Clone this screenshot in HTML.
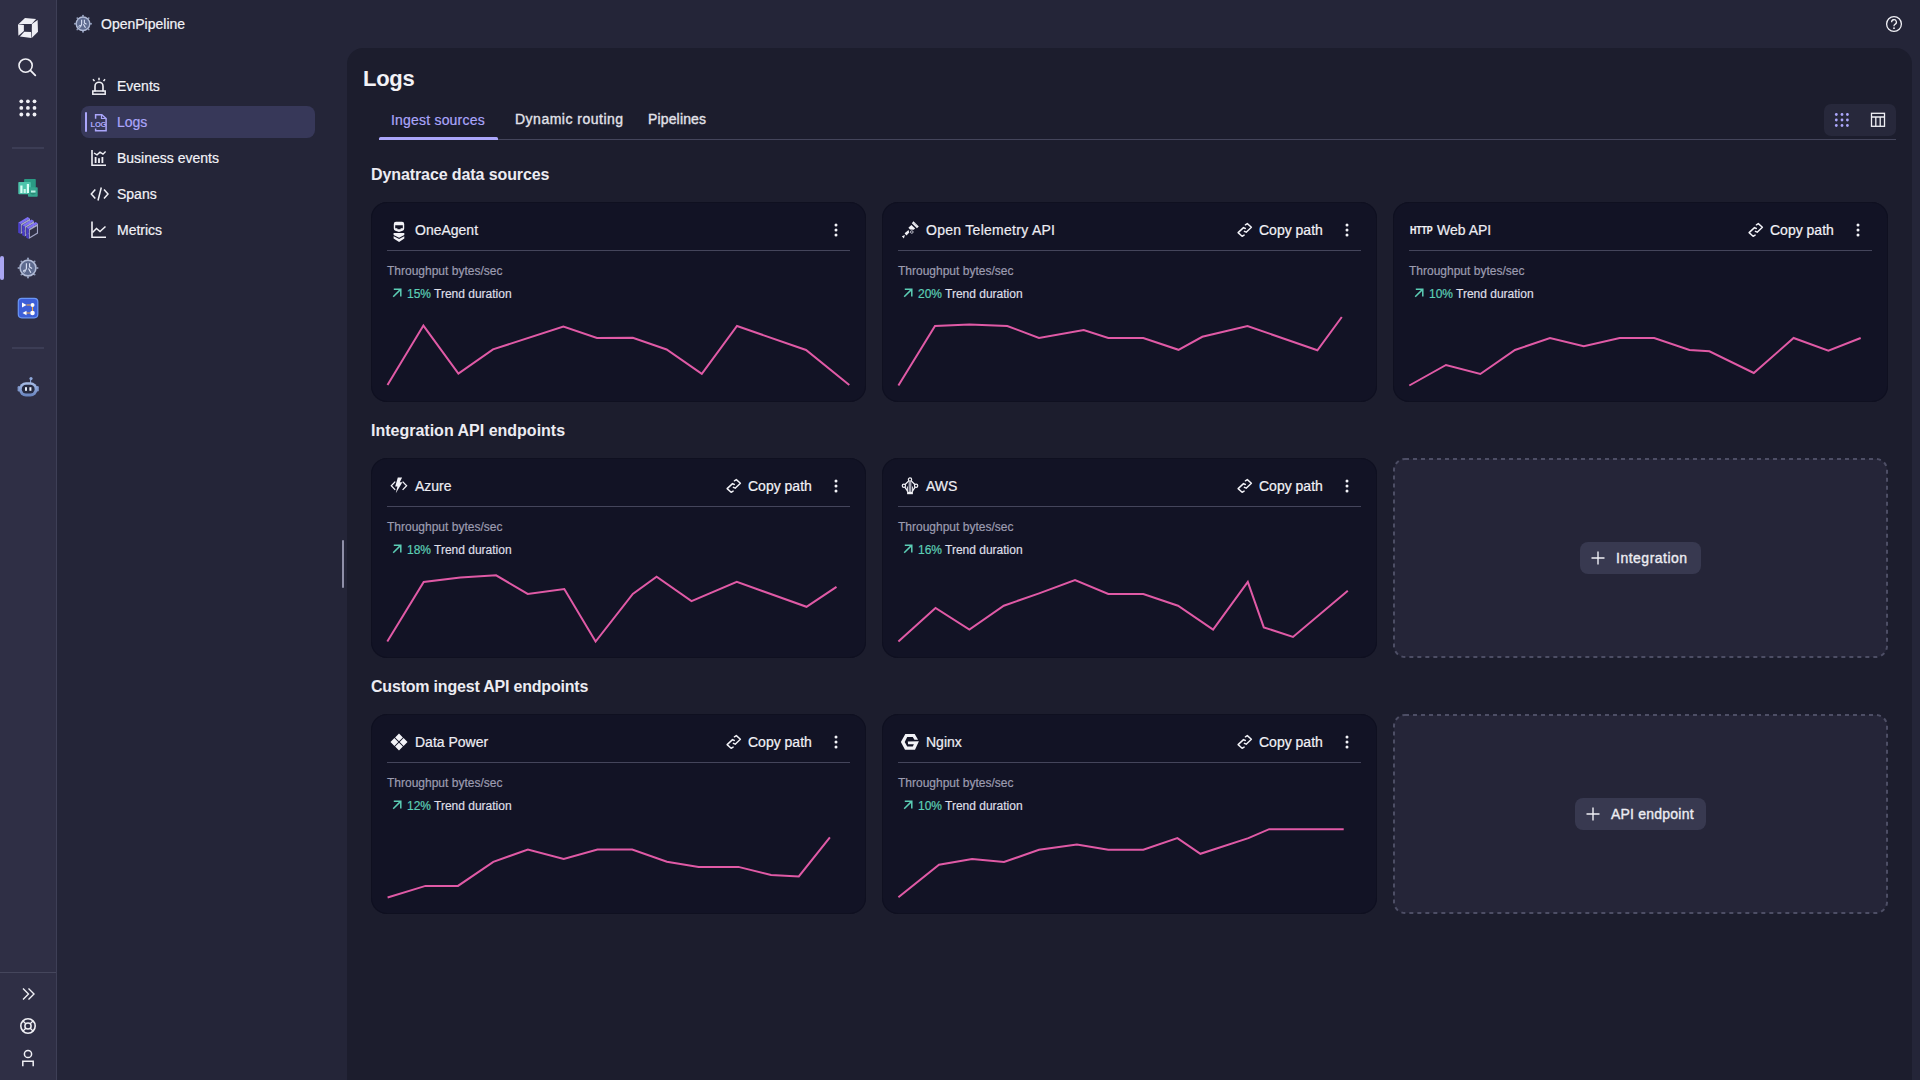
<!DOCTYPE html>
<html><head><meta charset="utf-8"><style>
*{margin:0;padding:0;box-sizing:border-box}
svg{display:block}
html,body{width:1920px;height:1080px;overflow:hidden;background:#242538;font-family:"Liberation Sans",sans-serif;color:#f2f2f7;-webkit-text-stroke-width:0.2px}
.abs{position:absolute}
#rail{position:absolute;left:0;top:0;width:57px;height:1080px;background:#2f2f45;border-right:1px solid #3e3f56}
#panel{position:absolute;left:347px;top:48px;width:1565px;height:1060px;background:#1c1d2d;border-radius:16px}
.nav{position:absolute;left:117px;font-size:14px;line-height:20px;white-space:nowrap}
.navicon{position:absolute;left:90px}
.sect{position:absolute;left:371px;font-size:16px;font-weight:bold;-webkit-text-stroke-width:0;line-height:20px;white-space:nowrap;letter-spacing:-0.22px;color:#ececf2}
.card{position:absolute;width:495px;height:200px;background:#121325;border-radius:16px;box-shadow:0 0 0 1px #0f1020 inset}
.card .cicon{position:absolute}
.ctitle{position:absolute;top:18px;font-size:14px;line-height:20px;white-space:nowrap;color:#ededf3}
.copy{position:absolute;left:377px;top:18px;font-size:14px;line-height:20px;white-space:nowrap}
.link{position:absolute;width:16px;height:16px}
.kebab{position:absolute;left:462px;top:20px;width:6px;height:16px}
.csep{position:absolute;left:16px;right:16px;top:48px;height:1px;background:#44455b}
.tp{position:absolute;left:16px;top:61px;font-size:12px;line-height:16px;color:#9c9cb0;white-space:nowrap}
.arrow{position:absolute;left:21px;top:86px;width:10px;height:10px}
.pct{position:absolute;left:36px;top:84px;font-size:12px;line-height:16px;color:#5ccdb5;white-space:nowrap}
.td{position:absolute;top:84px;font-size:12px;line-height:16px;white-space:nowrap;color:#dedee6}
.ph{position:absolute;width:495px;height:200px;background:#252538;border:1.5px dashed #4d4e65;border-radius:16px}
.btn{position:absolute;height:32px;background:#383950;border-radius:8px;font-size:14px;line-height:32px;white-space:nowrap}
</style></head><body>
<div id="rail">
 <svg class="abs" style="left:0;top:0" width="57" height="1080">
  <g fill="#efeff5">
   <path d="M18.6 23.9L25 18 36.1 19.1 31.7 23.9z"/>
   <path d="M31.9 23.9L37.6 19.9 38 31.7 31.7 38z"/>
   <path d="M19.9 36.5L24.3 31.7 31 32 31.3 38z"/>
   <path d="M18 24.3L23.9 25 23.9 31 18.4 35.8z"/>
  </g>
  <circle cx="25.6" cy="65.6" r="6.6" fill="none" stroke="#f0f0f5" stroke-width="1.6"/>
  <path d="M30.4 70.4L35.3 75.3" stroke="#f0f0f5" stroke-width="1.8" stroke-linecap="round"/>
  <g fill="#f0f0f5">
   <circle cx="21.3" cy="101.3" r="1.9"/><circle cx="27.9" cy="101.3" r="1.9"/><circle cx="34.5" cy="101.3" r="1.9"/>
   <circle cx="21.3" cy="107.9" r="1.9"/><circle cx="27.9" cy="107.9" r="1.9"/><circle cx="34.5" cy="107.9" r="1.9"/>
   <circle cx="21.3" cy="114.5" r="1.9"/><circle cx="27.9" cy="114.5" r="1.9"/><circle cx="34.5" cy="114.5" r="1.9"/>
  </g>
  <rect x="12" y="147" width="32" height="2" fill="#3c3d55"/>
  <rect x="24.1" y="178.9" width="11.7" height="9" rx="0.8" fill="#2a9a84"/>
  <rect x="18.3" y="182" width="12.5" height="12.2" rx="0.8" fill="#4cc4ab"/>
  <rect x="28" y="187.2" width="9.7" height="9.5" rx="0.8" fill="#35a58f"/>
  <rect x="20.3" y="185.5" width="2.2" height="7.5" fill="#d8fff6"/><rect x="23.6" y="189" width="2.2" height="4" fill="#c8f5ea"/><rect x="26.8" y="184" width="2.2" height="9" fill="#d8fff6"/>
  <path d="M30 193a3.5 3.5 0 0 0 6 0z" fill="#2a8a76"/><path d="M31 190.5h4.5v2h-4.5z" fill="#bff0e4"/>
  <polygon points="20.67,223.90 29.97,218.50 29.97,228.50 20.67,233.90" fill="#a3a6c6"/><polygon points="21.80,225.30 28.85,221.20 28.85,227.80 21.80,231.90" fill="#2f2f45"/><polygon points="18.17,222.70 20.67,223.90 20.67,233.90 18.17,232.70" fill="#4a3ec8"/><polygon points="18.17,222.70 27.60,217.10 29.97,218.50 20.67,223.90" fill="#7e70f6"/><polygon points="24.70,226.40 34.00,221.00 34.00,231.00 24.70,236.40" fill="#a3a6c6"/><polygon points="25.83,227.80 32.88,223.70 32.88,230.30 25.83,234.40" fill="#2f2f45"/><polygon points="22.20,225.20 24.70,226.40 24.70,236.40 22.20,235.20" fill="#4a3ec8"/><polygon points="22.20,225.20 31.63,219.60 34.00,221.00 24.70,226.40" fill="#7e70f6"/><polygon points="28.73,228.90 38.03,223.50 38.03,233.50 28.73,238.90" fill="#a3a6c6"/><polygon points="29.86,230.30 36.91,226.20 36.91,232.80 29.86,236.90" fill="#2f2f45"/><polygon points="26.23,227.70 28.73,228.90 28.73,238.90 26.23,237.70" fill="#4a3ec8"/><polygon points="26.23,227.70 35.66,222.10 38.03,223.50 28.73,228.90" fill="#7e70f6"/>
  <rect x="0" y="256" width="4" height="24" rx="2" fill="#aaa6f2"/>
  <g fill="#8e9ab8">
   <circle cx="28" cy="258.6" r="1.1"/><circle cx="28" cy="277.4" r="1.1"/><circle cx="18.6" cy="268" r="1.1"/><circle cx="37.4" cy="268" r="1.1"/>
   <circle cx="21.4" cy="261.4" r="0.95"/><circle cx="34.6" cy="261.4" r="0.95"/><circle cx="21.4" cy="274.6" r="0.95"/><circle cx="34.6" cy="274.6" r="0.95"/>
  </g>
  <circle cx="28" cy="268" r="8.7" fill="#b1bbd6"/>
  <circle cx="28" cy="268" r="7.1" fill="#5d6a8e"/>
  <path d="M26.4 263.3v5.2c0 1-.8 1.8-2 2.4M29.6 263.3v3.7l2.5 1.5M28.5 268.5l2.4 4.2" fill="none" stroke="#d9e0f4" stroke-width="1.15"/>
  <circle cx="24.3" cy="271.1" r="1" fill="none" stroke="#d9e0f4" stroke-width="0.9"/>
  <rect x="18.3" y="298.3" width="19.5" height="19.5" rx="3.5" fill="#3d5fd8" stroke="#6a95f4" stroke-width="1.2"/>
  <path d="M22 302.5l4.5 2.5-4.5 2.5z" fill="#ffffff"/><circle cx="32.5" cy="305" r="2" fill="#ffffff"/>
  <path d="M26.5 305h4M32.5 307v4M30 313h-4" stroke="#f4a33a" stroke-width="1.1"/>
  <path d="M22.5 313l4-2.3v4.6z" fill="#ffffff"/><circle cx="32.5" cy="313" r="2.3" fill="#ffffff"/>
  <rect x="12" y="347" width="32" height="2" fill="#3c3d55"/>
  <defs><linearGradient id="rb" x1="0" y1="0" x2="0" y2="1"><stop offset="0" stop-color="#a9bde6"/><stop offset="1" stop-color="#6682bd"/></linearGradient></defs>
  <circle cx="31" cy="378.6" r="1.6" fill="#8fa9dc"/>
  <path d="M30.6 380v3" stroke="#8fa9dc" stroke-width="1"/>
  <rect x="17.6" y="386" width="2.4" height="5.5" rx="1.2" fill="#7d95c9"/><rect x="36.4" y="386" width="2.4" height="5.5" rx="1.2" fill="#7d95c9"/>
  <rect x="19" y="382.3" width="18.4" height="14.3" rx="7" fill="url(#rb)"/>
  <rect x="21.8" y="384.8" width="12.8" height="8.6" rx="4.2" fill="#262a40"/>
  <rect x="25" y="387.2" width="2" height="3.6" fill="#e8edf8"/><rect x="29.4" y="387.2" width="2" height="3.6" fill="#e8edf8"/>
  <rect x="0" y="972" width="56" height="1" fill="#45465c"/>
  <path d="M23 988.5l5.5 5.5-5.5 5.5M28.5 988.5l5.5 5.5-5.5 5.5" fill="none" stroke="#f0f0f5" stroke-width="1.4"/>
  <circle cx="28" cy="1026" r="7.2" fill="none" stroke="#f0f0f5" stroke-width="1.6"/>
  <circle cx="28" cy="1026" r="3.1" fill="none" stroke="#f0f0f5" stroke-width="1.5"/>
  <path d="M23 1021l2.8 2.8M33 1021l-2.8 2.8M23 1031l2.8-2.8M33 1031l-2.8-2.8" stroke="#f0f0f5" stroke-width="1.3"/>
  <circle cx="28" cy="1054" r="3.6" fill="none" stroke="#f0f0f5" stroke-width="1.5"/>
  <path d="M22.8 1066.2v-5h10.4v5" fill="none" stroke="#f0f0f5" stroke-width="1.5"/>
 </svg>
</div>

<!-- top header -->
<svg class="abs" style="left:73px;top:14px" width="20" height="20" viewBox="0 0 20 20">
 <g transform="translate(10 9.75) scale(0.86)">
  <g fill="#8e9ab8">
   <circle cx="0" cy="-9.3" r="1.2"/><circle cx="0" cy="9.3" r="1.2"/><circle cx="-9.3" cy="0" r="1.2"/><circle cx="9.3" cy="0" r="1.2"/>
   <circle cx="-6.6" cy="-6.6" r="1.05"/><circle cx="6.6" cy="-6.6" r="1.05"/><circle cx="-6.6" cy="6.6" r="1.05"/><circle cx="6.6" cy="6.6" r="1.05"/>
  </g>
  <circle cx="0" cy="0" r="8.7" fill="#b1bbd6"/>
  <circle cx="0" cy="0" r="7.1" fill="#5d6a8e"/>
  <path d="M-1.6 -4.7v5.2c0 1-.8 1.8-2 2.4M1.6 -4.7v3.7l2.5 1.5M0.5 0.5l2.4 4.2" fill="none" stroke="#d9e0f4" stroke-width="1.25"/>
  <circle cx="-3.7" cy="3.1" r="1.1" fill="none" stroke="#d9e0f4" stroke-width="1"/>
 </g>
</svg>
<div class="abs" style="left:101px;top:14px;font-size:14px;line-height:20px">OpenPipeline</div>
<svg class="abs" style="left:1884px;top:14px" width="20" height="20" viewBox="0 0 20 20">
 <circle cx="10" cy="10" r="7.4" fill="none" stroke="#f0f0f5" stroke-width="1.3"/>
 <path d="M7.6 8.2a2.4 2.4 0 1 1 3.4 2.1c-.7.4-1 .8-1 1.6v.4" fill="none" stroke="#f0f0f5" stroke-width="1.3"/>
 <circle cx="10" cy="14.2" r="0.9" fill="#f0f0f5"/>
</svg>

<!-- sidebar -->
<div class="abs" style="left:81px;top:106px;width:234px;height:32px;background:#373859;border-radius:8px"></div>
<div class="abs" style="left:85px;top:112px;width:2px;height:20px;background:#aba6fb;border-radius:1px"></div>
<svg class="abs" style="left:89px;top:76px" width="20" height="20" viewBox="0 0 20 20">
 <path d="M6 15.5v-5.3a4 4 0 0 1 8 0v5.3" fill="none" stroke="#f0f0f5" stroke-width="1.6"/>
 <rect x="3.8" y="15" width="12.4" height="3.2" fill="none" stroke="#f0f0f5" stroke-width="1.5"/>
 <path d="M10 1.8v2.4M4 3.2l1.5 1.9M16 3.2l-1.5 1.9" stroke="#f0f0f5" stroke-width="1.5"/>
</svg>
<svg class="abs" style="left:89px;top:112px" width="22" height="22" viewBox="0 0 22 22">
 <path d="M6.6 6.8V2.7h6.2l4.3 3.8v12.3H6.6v-2.4" fill="none" stroke="#aba6fb" stroke-width="1.5"/>
 <path d="M12.5 2.7v3.8h4.6" fill="none" stroke="#aba6fb" stroke-width="1.2"/>
 <rect x="1" y="8.6" width="13" height="7.2" fill="#373859"/>
 <text x="1.6" y="15.2" font-family="Liberation Sans" font-weight="bold" font-size="7.6" letter-spacing="-0.3" fill="#aba6fb">LOG</text>
</svg>
<svg class="abs" style="left:89px;top:148px" width="20" height="20" viewBox="0 0 20 20">
 <path d="M3 2v15.3h14" fill="none" stroke="#f0f0f5" stroke-width="1.6"/>
 <path d="M5 5l3 1.8 3-2.6 3 2 2.6-2.6" fill="none" stroke="#f0f0f5" stroke-width="1.4"/>
 <path d="M6.6 9v6M10 10.3v4.7M13.4 9v6" stroke="#f0f0f5" stroke-width="1.8"/>
</svg>
<svg class="abs" style="left:89px;top:184px" width="22" height="20" viewBox="0 0 22 20">
 <path d="M6.3 5.5L2.3 10l4 4.5M15 5.5l4 4.5-4 4.5M12.3 3.5l-3.3 13" fill="none" stroke="#f0f0f5" stroke-width="1.5"/>
</svg>
<svg class="abs" style="left:89px;top:220px" width="20" height="20" viewBox="0 0 20 20">
 <path d="M3 1.5v15.8h14" fill="none" stroke="#f0f0f5" stroke-width="1.6"/>
 <path d="M3.5 12.5l4-4 3.5 3 5.5-5" fill="none" stroke="#f0f0f5" stroke-width="1.5"/>
</svg>
<div class="nav" style="top:76px">Events</div>
<div class="nav" style="top:112px;color:#aba6fb">Logs</div>
<div class="nav" style="top:148px">Business events</div>
<div class="nav" style="top:184px">Spans</div>
<div class="nav" style="top:220px">Metrics</div>
<div class="abs" style="left:342px;top:540px;width:2px;height:48px;background:#8f8fa8;border-radius:1px"></div>

<div id="panel"></div>
<div class="abs" style="left:363px;top:65px;-webkit-text-stroke-width:0;font-size:22px;font-weight:bold;line-height:28px;letter-spacing:-0.3px">Logs</div>
<div class="abs" style="left:379px;top:139px;width:1517px;height:1px;background:#44455b"></div>
<div class="abs" style="left:379px;top:137px;width:119px;height:3px;background:#aba6fb;border-radius:1.5px 1.5px 0 0"></div>
<div class="abs" style="left:391px;top:110px;font-size:14px;line-height:20px;color:#aba6fb;letter-spacing:0.2px">Ingest sources</div>
<div class="abs" style="left:515px;top:109px;font-size:14px;line-height:20px;letter-spacing:0.5px;-webkit-text-stroke:0.35px #e2e2ea;color:#e2e2ea">Dynamic routing</div>
<div class="abs" style="left:648px;top:109px;font-size:14px;line-height:20px;letter-spacing:0.15px;-webkit-text-stroke:0.35px #e2e2ea;color:#e2e2ea">Pipelines</div>
<div class="abs" style="left:1824px;top:104px;width:72px;height:32px;background:#27283b;border-radius:7px"></div>
<svg class="abs" style="left:1830px;top:108px" width="60" height="24" viewBox="0 0 60 24">
 <g fill="#aba6fb">
  <circle cx="6.3" cy="6.5" r="1.4"/><circle cx="12" cy="6.5" r="1.4"/><circle cx="17.4" cy="6.5" r="1.4"/>
  <circle cx="6.3" cy="12" r="1.4"/><circle cx="12" cy="12" r="1.4"/><circle cx="17.4" cy="12" r="1.4"/>
  <circle cx="6.3" cy="17.5" r="1.4"/><circle cx="12" cy="17.5" r="1.4"/><circle cx="17.4" cy="17.5" r="1.4"/>
 </g>
 <rect x="41.5" y="5.3" width="13" height="13" fill="none" stroke="#f0f0f5" stroke-width="1.3"/>
 <path d="M41.5 9h13M45.8 9v9.3M50.2 9v9.3" stroke="#f0f0f5" stroke-width="1.3"/>
</svg>

<div class="sect" style="top:165px;letter-spacing:-0.1px">Dynatrace data sources</div>
<div class="sect" style="top:421px;letter-spacing:0px">Integration API endpoints</div>
<div class="sect" style="top:677px;letter-spacing:-0.2px">Custom ingest API endpoints</div>
<div class="card" style="left:371px;top:202px"><div class="cicon" style="left:19px;top:19px"><svg width="12" height="22" viewBox="0 0 12 22" style="margin-left:3px;margin-top:0px"><path d="M0.8 3a2.2 2.2 0 0 1 2.2-2.2h6a2.2 2.2 0 0 1 2.2 2.2v4.6a2.4 2.4 0 0 1-1.6 2.2L6 11 2.4 9.8A2.4 2.4 0 0 1 0.8 7.6z M2.2 4.3h7.6v2.9H7.6v1H4.4v-1H2.2z" fill="#f2f2f7" fill-rule="evenodd"/><path d="M0.6 12.1h10.7V14L6.1 16.8 0.6 14z M0.6 15.3l5.5 2.8 5.2-2.8v2.1L6.1 21 0.6 17.4z" fill="#f2f2f7"/></svg></div><div class="ctitle" style="left:44px">OneAgent</div><div class="kebab"><svg width="6" height="16" viewBox="0 0 6 16"><circle cx="3" cy="3" r="1.5" fill="#f2f2f7"/><circle cx="3" cy="8" r="1.5" fill="#f2f2f7"/><circle cx="3" cy="13" r="1.5" fill="#f2f2f7"/></svg></div><div class="csep"></div><div class="tp">Throughput bytes/sec</div><div class="arrow"><svg width="10" height="10" viewBox="0 0 10 10"><path d="M1.2 8.8L8.6 1.4M1.8 1.3h7v7.2" fill="none" stroke="#5ccdb5" stroke-width="1.5"/></svg></div><div class="pct">15%</div><div class="td" style="left:63px">Trend duration</div></div><div class="card" style="left:882px;top:202px"><div class="cicon" style="left:19px;top:19px"><svg width="22" height="22" viewBox="0 0 22 22" style="margin-left:-2px;margin-top:-2px"><path d="M12.85 4.3L14.45 2.35 19.75 7.45 17.95 9.15z" fill="#f2f2f7"/><path d="M14.3 5.2l1.3-1.4M15.6 6.4l1.3-1.4M16.9 7.6l1.3-1.4" stroke="#9a9aa8" stroke-width="0.6"/><path d="M9.4 8.7L12.4 5.9 16.1 9.6 14.7 10.8 11 10.4z" fill="#f2f2f7"/><path d="M5.6 14.3L9.5 10.9 10.3 13.4 7.4 16.6z" fill="#f2f2f7"/><path d="M2.85 17.3L5.9 16.1 4.9 19.4z" fill="#f2f2f7"/><circle cx="12.8" cy="13" r="1.3" fill="none" stroke="#b8b8c4" stroke-width="1"/></svg></div><div class="ctitle" style="left:44px"><span style="letter-spacing:0.28px">Open Telemetry API</span></div><div class="link" style="left:355px;top:20px"><svg width="16" height="16" viewBox="0 0 16 16"><path d="M8.4 2.8L10.3 1.6L14.4 5.2L9.2 10.2L7.4 9.3M8.3 6.5L6.5 5.6L1.1 10.6L5.1 14.3L7.1 13.1" fill="none" stroke="#f2f2f7" stroke-width="1.45" stroke-linejoin="round" stroke-linecap="round"/></svg></div><div class="copy">Copy path</div><div class="kebab"><svg width="6" height="16" viewBox="0 0 6 16"><circle cx="3" cy="3" r="1.5" fill="#f2f2f7"/><circle cx="3" cy="8" r="1.5" fill="#f2f2f7"/><circle cx="3" cy="13" r="1.5" fill="#f2f2f7"/></svg></div><div class="csep"></div><div class="tp">Throughput bytes/sec</div><div class="arrow"><svg width="10" height="10" viewBox="0 0 10 10"><path d="M1.2 8.8L8.6 1.4M1.8 1.3h7v7.2" fill="none" stroke="#5ccdb5" stroke-width="1.5"/></svg></div><div class="pct">20%</div><div class="td" style="left:63px">Trend duration</div></div><div class="card" style="left:1393px;top:202px"><div class="cicon" style="left:19px;top:19px"><span style="display:block;margin-left:-2px;margin-top:3px;font:bold 11px 'Liberation Sans',sans-serif;letter-spacing:-0.2px;transform:scaleX(0.8);transform-origin:0 0;color:#f2f2f7">HTTP</span></div><div class="ctitle" style="left:44px">Web API</div><div class="link" style="left:355px;top:20px"><svg width="16" height="16" viewBox="0 0 16 16"><path d="M8.4 2.8L10.3 1.6L14.4 5.2L9.2 10.2L7.4 9.3M8.3 6.5L6.5 5.6L1.1 10.6L5.1 14.3L7.1 13.1" fill="none" stroke="#f2f2f7" stroke-width="1.45" stroke-linejoin="round" stroke-linecap="round"/></svg></div><div class="copy">Copy path</div><div class="kebab"><svg width="6" height="16" viewBox="0 0 6 16"><circle cx="3" cy="3" r="1.5" fill="#f2f2f7"/><circle cx="3" cy="8" r="1.5" fill="#f2f2f7"/><circle cx="3" cy="13" r="1.5" fill="#f2f2f7"/></svg></div><div class="csep"></div><div class="tp">Throughput bytes/sec</div><div class="arrow"><svg width="10" height="10" viewBox="0 0 10 10"><path d="M1.2 8.8L8.6 1.4M1.8 1.3h7v7.2" fill="none" stroke="#5ccdb5" stroke-width="1.5"/></svg></div><div class="pct">10%</div><div class="td" style="left:63px">Trend duration</div></div><div class="card" style="left:371px;top:458px"><div class="cicon" style="left:19px;top:19px"><svg width="18" height="18" viewBox="0 0 18 18"><path d="M5.2 4.6L1.3 8.8l3.9 4.1" fill="none" stroke="#f2f2f7" stroke-width="1.3"/><path d="M12.6 4.6l4 4.2-4 4.1" fill="none" stroke="#f2f2f7" stroke-width="1.3"/><path d="M7.8 0.4h4.3L9.8 5.2h2.6L5.8 16.2l1.6-6.8H5.2z" fill="#f2f2f7"/></svg></div><div class="ctitle" style="left:44px">Azure</div><div class="link" style="left:355px;top:20px"><svg width="16" height="16" viewBox="0 0 16 16"><path d="M8.4 2.8L10.3 1.6L14.4 5.2L9.2 10.2L7.4 9.3M8.3 6.5L6.5 5.6L1.1 10.6L5.1 14.3L7.1 13.1" fill="none" stroke="#f2f2f7" stroke-width="1.45" stroke-linejoin="round" stroke-linecap="round"/></svg></div><div class="copy">Copy path</div><div class="kebab"><svg width="6" height="16" viewBox="0 0 6 16"><circle cx="3" cy="3" r="1.5" fill="#f2f2f7"/><circle cx="3" cy="8" r="1.5" fill="#f2f2f7"/><circle cx="3" cy="13" r="1.5" fill="#f2f2f7"/></svg></div><div class="csep"></div><div class="tp">Throughput bytes/sec</div><div class="arrow"><svg width="10" height="10" viewBox="0 0 10 10"><path d="M1.2 8.8L8.6 1.4M1.8 1.3h7v7.2" fill="none" stroke="#5ccdb5" stroke-width="1.5"/></svg></div><div class="pct">18%</div><div class="td" style="left:63px">Trend duration</div></div><div class="card" style="left:882px;top:458px"><div class="cicon" style="left:19px;top:19px"><svg width="18" height="18" viewBox="0 0 18 18"><path d="M2.9 8.8L9 2.6 15.1 8.8M2.9 8.8L6.8 14.3M15.1 8.8L11.2 14.3" fill="none" stroke="#f2f2f7" stroke-width="1.3"/><rect x="7.6" y="4.5" width="2.8" height="10.6" fill="#a8a8b4"/><path d="M6.4 9.5V15M11.6 9.5V15" stroke="#e8e8ee" stroke-width="1"/><rect x="6.1" y="14.8" width="5.8" height="2.4" fill="#f2f2f7"/><circle cx="9" cy="2.6" r="1.65" fill="#131325" stroke="#f2f2f7" stroke-width="1.2"/><circle cx="2.9" cy="8.8" r="1.65" fill="#131325" stroke="#f2f2f7" stroke-width="1.2"/><circle cx="15.1" cy="8.8" r="1.65" fill="#131325" stroke="#f2f2f7" stroke-width="1.2"/></svg></div><div class="ctitle" style="left:44px">AWS</div><div class="link" style="left:355px;top:20px"><svg width="16" height="16" viewBox="0 0 16 16"><path d="M8.4 2.8L10.3 1.6L14.4 5.2L9.2 10.2L7.4 9.3M8.3 6.5L6.5 5.6L1.1 10.6L5.1 14.3L7.1 13.1" fill="none" stroke="#f2f2f7" stroke-width="1.45" stroke-linejoin="round" stroke-linecap="round"/></svg></div><div class="copy">Copy path</div><div class="kebab"><svg width="6" height="16" viewBox="0 0 6 16"><circle cx="3" cy="3" r="1.5" fill="#f2f2f7"/><circle cx="3" cy="8" r="1.5" fill="#f2f2f7"/><circle cx="3" cy="13" r="1.5" fill="#f2f2f7"/></svg></div><div class="csep"></div><div class="tp">Throughput bytes/sec</div><div class="arrow"><svg width="10" height="10" viewBox="0 0 10 10"><path d="M1.2 8.8L8.6 1.4M1.8 1.3h7v7.2" fill="none" stroke="#5ccdb5" stroke-width="1.5"/></svg></div><div class="pct">16%</div><div class="td" style="left:63px">Trend duration</div></div><svg class="abs" style="left:1393px;top:458px" width="495" height="200"><rect x="1" y="1" width="493" height="198" rx="11" fill="#252538" stroke="#4d4e65" stroke-width="2" stroke-dasharray="4 4"/></svg><div class="card" style="left:371px;top:714px"><div class="cicon" style="left:19px;top:19px"><svg width="18" height="18" viewBox="0 0 18 18"><path d="M9 0.5l3.9 3.9L9 8.3 5.1 4.4z M9 9.7l3.9 3.9L9 17.5l-3.9-3.9z M0.5 9l3.9-3.9L8.3 9l-3.9 3.9z M9.7 9l3.9-3.9L17.5 9l-3.9 3.9z" fill="#f2f2f7"/></svg></div><div class="ctitle" style="left:44px">Data Power</div><div class="link" style="left:355px;top:20px"><svg width="16" height="16" viewBox="0 0 16 16"><path d="M8.4 2.8L10.3 1.6L14.4 5.2L9.2 10.2L7.4 9.3M8.3 6.5L6.5 5.6L1.1 10.6L5.1 14.3L7.1 13.1" fill="none" stroke="#f2f2f7" stroke-width="1.45" stroke-linejoin="round" stroke-linecap="round"/></svg></div><div class="copy">Copy path</div><div class="kebab"><svg width="6" height="16" viewBox="0 0 6 16"><circle cx="3" cy="3" r="1.5" fill="#f2f2f7"/><circle cx="3" cy="8" r="1.5" fill="#f2f2f7"/><circle cx="3" cy="13" r="1.5" fill="#f2f2f7"/></svg></div><div class="csep"></div><div class="tp">Throughput bytes/sec</div><div class="arrow"><svg width="10" height="10" viewBox="0 0 10 10"><path d="M1.2 8.8L8.6 1.4M1.8 1.3h7v7.2" fill="none" stroke="#5ccdb5" stroke-width="1.5"/></svg></div><div class="pct">12%</div><div class="td" style="left:63px">Trend duration</div></div><div class="card" style="left:882px;top:714px"><div class="cicon" style="left:19px;top:19px"><svg width="18" height="18" viewBox="0 0 18 18"><path d="M4.3 0.9H13.7L17.06 6.78H13.44L11.78 4H6.22L3.72 9 6.22 13.44H11.78L12.9 11.2H7.06L6.78 8.44 17.9 8.17 14 16.8H4L-0.17 9z" fill="#f2f2f7"/></svg></div><div class="ctitle" style="left:44px">Nginx</div><div class="link" style="left:355px;top:20px"><svg width="16" height="16" viewBox="0 0 16 16"><path d="M8.4 2.8L10.3 1.6L14.4 5.2L9.2 10.2L7.4 9.3M8.3 6.5L6.5 5.6L1.1 10.6L5.1 14.3L7.1 13.1" fill="none" stroke="#f2f2f7" stroke-width="1.45" stroke-linejoin="round" stroke-linecap="round"/></svg></div><div class="copy">Copy path</div><div class="kebab"><svg width="6" height="16" viewBox="0 0 6 16"><circle cx="3" cy="3" r="1.5" fill="#f2f2f7"/><circle cx="3" cy="8" r="1.5" fill="#f2f2f7"/><circle cx="3" cy="13" r="1.5" fill="#f2f2f7"/></svg></div><div class="csep"></div><div class="tp">Throughput bytes/sec</div><div class="arrow"><svg width="10" height="10" viewBox="0 0 10 10"><path d="M1.2 8.8L8.6 1.4M1.8 1.3h7v7.2" fill="none" stroke="#5ccdb5" stroke-width="1.5"/></svg></div><div class="pct">10%</div><div class="td" style="left:63px">Trend duration</div></div><svg class="abs" style="left:1393px;top:714px" width="495" height="200"><rect x="1" y="1" width="493" height="198" rx="11" fill="#252538" stroke="#4d4e65" stroke-width="2" stroke-dasharray="4 4"/></svg><div class="btn" style="left:1580px;top:542px;width:121px"><svg class="abs" style="left:11px;top:9px" width="14" height="14" viewBox="0 0 14 14"><path d="M7 0.5v13M0.5 7h13" stroke="#f0f0f5" stroke-width="1.4"/></svg><span class="abs" style="left:36px;top:0;letter-spacing:0.5px;-webkit-text-stroke:0.35px #ececf2;color:#ececf2">Integration</span></div><div class="btn" style="left:1575px;top:798px;width:131px"><svg class="abs" style="left:11px;top:9px" width="14" height="14" viewBox="0 0 14 14"><path d="M7 0.5v13M0.5 7h13" stroke="#f0f0f5" stroke-width="1.4"/></svg><span class="abs" style="left:36px;top:0;letter-spacing:0.22px;-webkit-text-stroke:0.35px #ececf2;color:#ececf2">API endpoint</span></div><svg class="abs" style="left:0;top:0;pointer-events:none" width="1920" height="1080"><polyline points="387.5,385.0 423.4,325.6 458.4,373.5 493.0,349.4 563.4,326.5 597.0,338.0 632.8,337.8 666.6,349.5 701.8,373.8 737.0,326.0 806.0,350.0 849.3,385.0" fill="none" stroke="#e05aa6" stroke-width="2" stroke-linejoin="miter"/><polyline points="898.4,385.5 935.0,326.0 969.4,324.6 1007.3,326.0 1039.0,338.0 1083.7,330.0 1108.3,338.0 1143.3,338.0 1178.5,349.8 1202.3,336.8 1247.5,326.0 1317.4,350.3 1341.8,317.0" fill="none" stroke="#e05aa6" stroke-width="2" stroke-linejoin="miter"/><polyline points="1409.3,385.5 1446.0,365.0 1480.3,374.0 1515.0,350.0 1550.0,338.0 1583.8,346.3 1619.7,338.0 1654.2,338.0 1689.5,350.0 1709.4,351.3 1753.8,373.0 1793.6,338.0 1828.4,350.7 1860.7,338.0" fill="none" stroke="#e05aa6" stroke-width="2" stroke-linejoin="miter"/><polyline points="387.3,641.5 423.7,581.9 460.3,577.6 496.1,575.3 527.7,593.9 564.3,589.0 595.6,641.5 632.8,593.9 656.6,576.7 691.5,601.1 736.8,581.9 806.5,606.8 836.5,586.8" fill="none" stroke="#e05aa6" stroke-width="2" stroke-linejoin="miter"/><polyline points="898.4,641.5 935.5,607.9 969.4,629.6 1003.8,605.7 1038.4,593.6 1075.0,580.0 1108.3,594.0 1143.3,594.0 1178.0,605.7 1213.1,629.6 1247.8,581.9 1263.8,627.4 1293.0,636.9 1347.8,590.8" fill="none" stroke="#e05aa6" stroke-width="2" stroke-linejoin="miter"/><polyline points="387.6,897.5 425.5,885.9 458.0,885.9 493.3,861.8 527.9,849.6 563.7,859.0 597.5,849.6 632.2,849.6 666.9,861.8 698.6,866.9 738.4,866.9 771.1,875.0 798.8,876.4 829.9,837.4" fill="none" stroke="#e05aa6" stroke-width="2" stroke-linejoin="miter"/><polyline points="898.4,897.2 939.0,864.7 972.1,859.0 1004.0,862.0 1039.0,849.8 1076.9,844.4 1108.3,849.8 1143.3,849.8 1177.4,838.1 1200.4,853.8 1248.4,838.1 1269.2,829.2 1343.7,829.2" fill="none" stroke="#e05aa6" stroke-width="2" stroke-linejoin="miter"/></svg></body></html>
